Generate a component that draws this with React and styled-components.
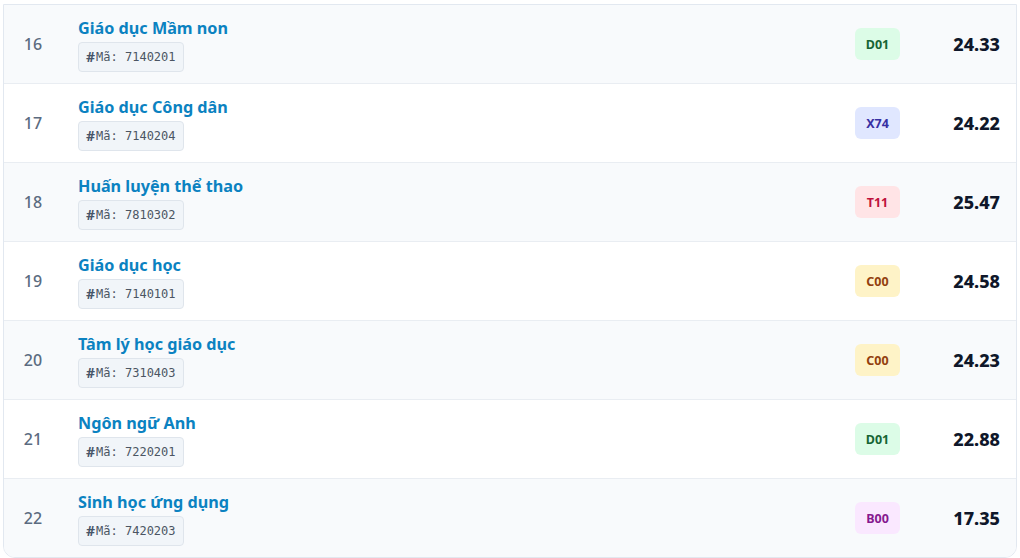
import React from "react";
import styled, { createGlobalStyle } from "styled-components";

const Global = createGlobalStyle`
  html, body { margin: 0; padding: 0; background: #ffffff; }
  body { font-family: "Noto Sans", "Open Sans", sans-serif; }
`;

const Page = styled.div`
  padding: 4px 3px 0 3px;
`;

const Card = styled.div`
  border: 1px solid #e2e8f0;
  border-radius: 0 0 12px 12px;
  overflow: hidden;
  background: #ffffff;
`;

const Row = styled.div`
  display: grid;
  grid-template-columns: 58px 1fr 45px 84px;
  column-gap: 16px;
  align-items: center;
  height: 78px;
  padding-right: 16px;
  box-sizing: border-box;
  background: ${(p) => (p.$alt ? "#f8fafc" : "#ffffff")};
  & + & { border-top: 1px solid #e9edf2; height: 79px; }
`;

const Num = styled.div`
  text-align: center;
  font-size: 16px;
  font-weight: 500;
  color: #5b6b80;
`;

const Info = styled.div`
  display: flex;
  flex-direction: column;
  align-items: flex-start;
  gap: 3px;
`;

const Title = styled.div`
  font-size: 16.2px;
  font-weight: 700;
  color: #0b82c1;
  line-height: 22px;
`;

const Code = styled.div`
  display: inline-flex;
  align-items: center;
  height: 30px;
  box-sizing: border-box;
  padding: 0 7px;
  background: #f1f5f9;
  border: 1px solid #dfe5ec;
  border-radius: 4px;
  color: #4b5563;
  font-family: "DejaVu Sans Mono", "Liberation Mono", monospace;
  font-size: 12px;
`;

const Hash = styled.span`
  font-family: "Noto Sans", sans-serif;
  font-weight: 700;
  font-size: 14px;
  color: #475569;
  margin-right: 1px;
`;

const palette = {
  D01: { bg: "#dcfce7", fg: "#166534" },
  X74: { bg: "#e0e7ff", fg: "#3730a3" },
  T11: { bg: "#ffe4e6", fg: "#be123c" },
  C00: { bg: "#fef3c7", fg: "#92400e" },
  B00: { bg: "#fae8ff", fg: "#86198f" },
};

const Badge = styled.div`
  width: 45px;
  height: 32px;
  border-radius: 6px;
  display: flex;
  align-items: center;
  justify-content: center;
  font-size: 12.5px;
  font-weight: 700;
  background: ${(p) => palette[p.$code].bg};
  color: ${(p) => palette[p.$code].fg};
`;

const Score = styled.div`
  text-align: right;
  font-size: 18px;
  font-weight: 800;
  color: #0f172a;
`;

const rows = [
  [16, "Giáo dục Mầm non", "7140201", "D01", "24.33"],
  [17, "Giáo dục Công dân", "7140204", "X74", "24.22"],
  [18, "Huấn luyện thể thao", "7810302", "T11", "25.47"],
  [19, "Giáo dục học", "7140101", "C00", "24.58"],
  [20, "Tâm lý học giáo dục", "7310403", "C00", "24.23"],
  [21, "Ngôn ngữ Anh", "7220201", "D01", "22.88"],
  [22, "Sinh học ứng dụng", "7420203", "B00", "17.35"],
];

export default function App() {
  return (
    <>
      <Global />
      <Page>
        <Card>
          {rows.map(([n, name, code, grp, score], i) => (
            <Row key={n} $alt={i % 2 === 0}>
              <Num>{n}</Num>
              <Info>
                <Title>{name}</Title>
                <Code>
                  <Hash>#</Hash>Mã: {code}
                </Code>
              </Info>
              <Badge $code={grp}>{grp}</Badge>
              <Score>{score}</Score>
            </Row>
          ))}
        </Card>
      </Page>
    </>
  );
}
